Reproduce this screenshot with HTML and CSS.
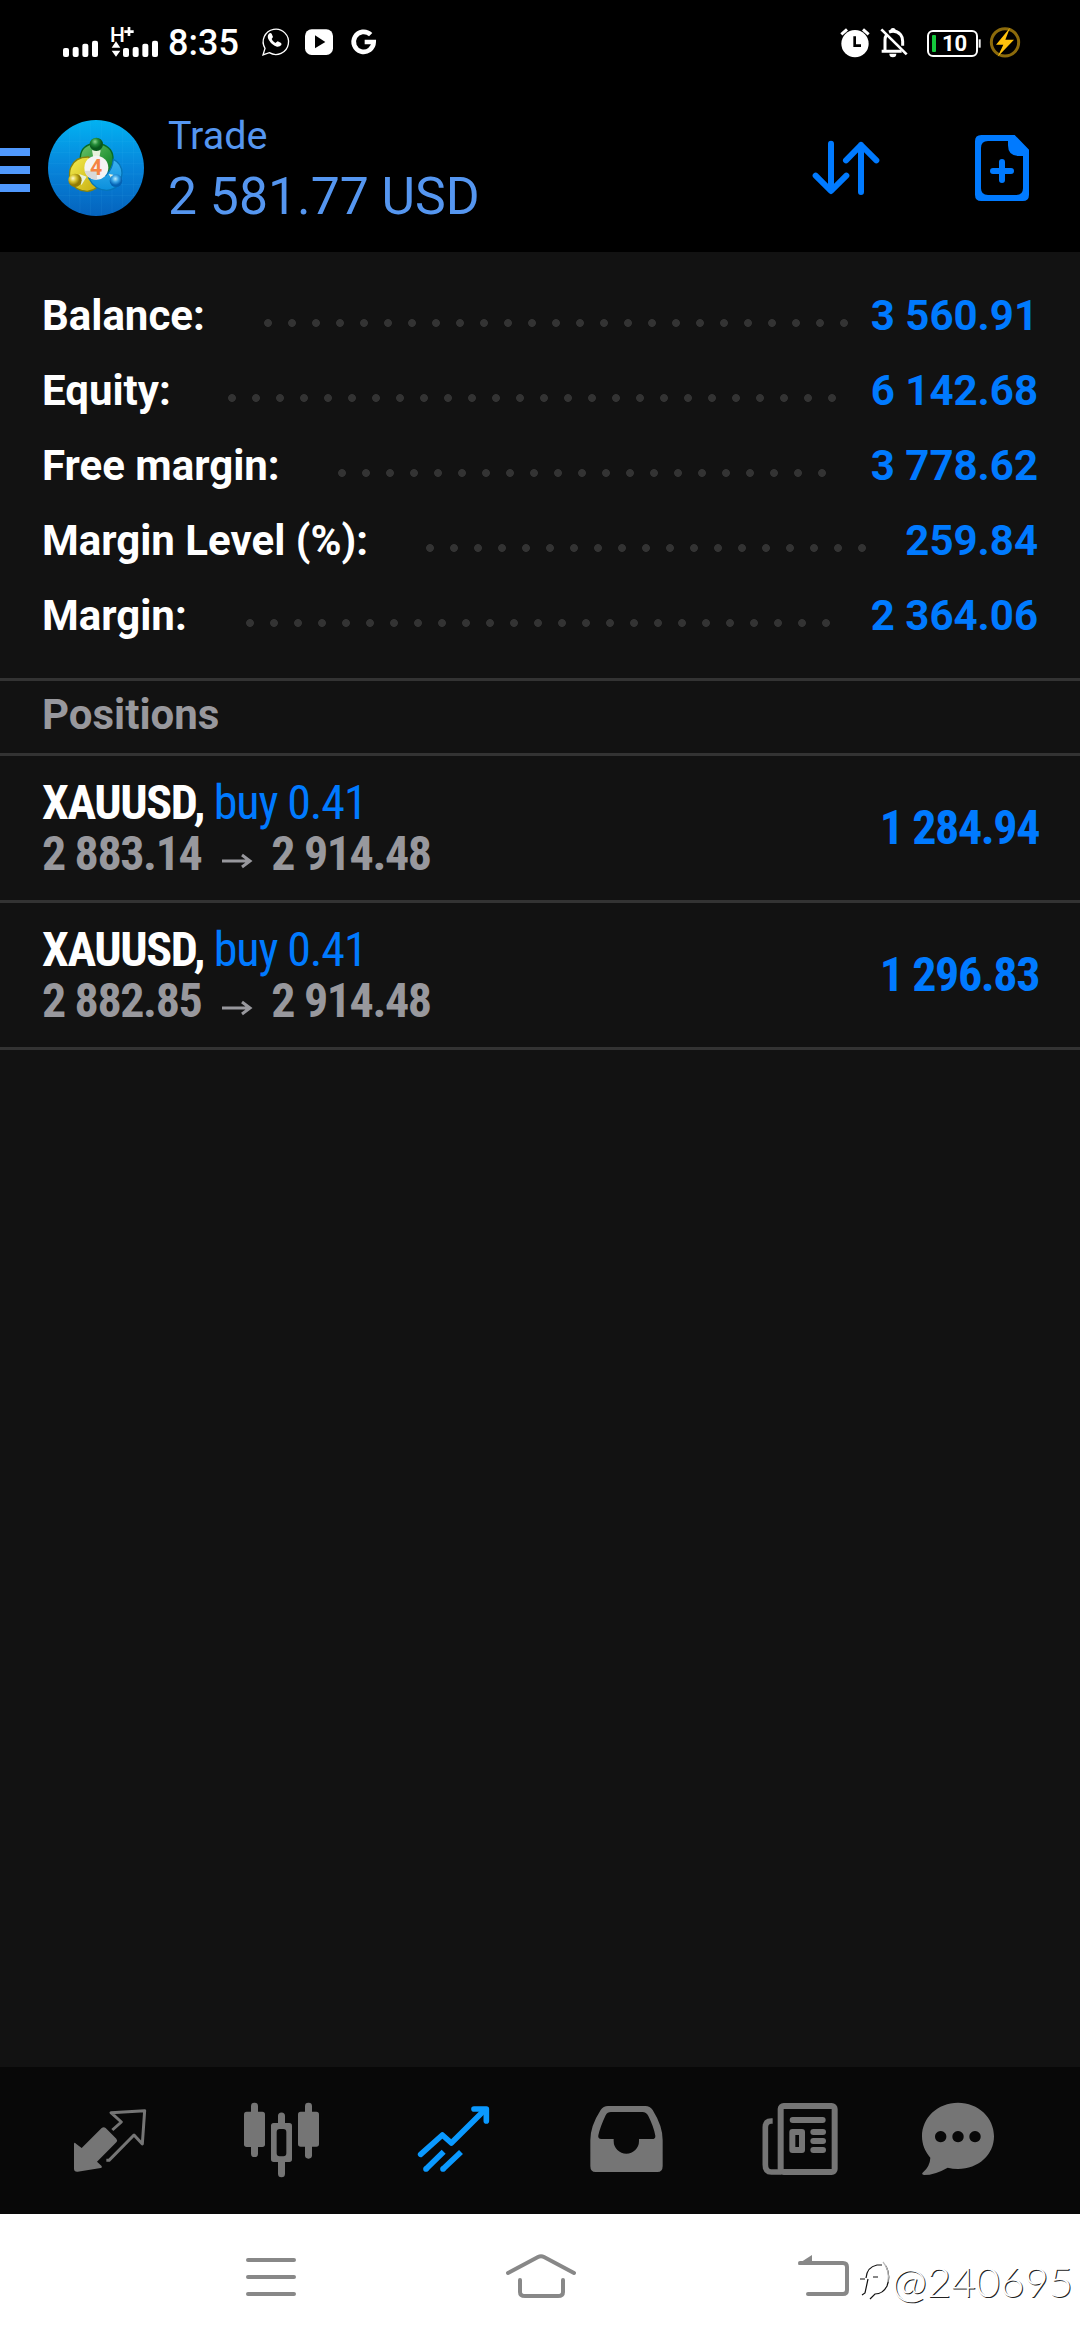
FILE: index.html
```html
<!DOCTYPE html>
<html lang="en">
<head>
<meta charset="utf-8">
<title>Trade</title>
<link rel="stylesheet" href="styles.css">
</head>
<body>
<main class="screen">
  <div class="status">
    <svg class="signal" viewBox="60 30 117 126" width="39" height="42"><g fill="#fff"><rect x="69" y="114" width="18" height="27" rx="6"/><rect x="98" y="111" width="18" height="30" rx="6"/><rect x="127" y="101" width="18" height="40" rx="6"/><rect x="156" y="92" width="18" height="49" rx="6"/></g></svg>
    <div class="network">
      <span class="network-type">H</span>
      <svg viewBox="210 30 150 126" width="50" height="42"><path d="M267 51v27M253 65h28" stroke="#fff" stroke-width="8"/><g fill="#fff"><path d="M228 94l13 19h-26zM228 140l13-18h-26z"/><rect x="249" y="114" width="18" height="27" rx="6"/><rect x="278" y="111" width="18" height="30" rx="6"/><rect x="307" y="101" width="18" height="40" rx="6"/><rect x="336" y="92" width="18" height="49" rx="6"/></g></svg>
    </div>
    <span class="clock">8:35</span>
    <svg class="apps" viewBox="654 30 366 126" width="122" height="42">
      <path d="M669 135l6-20A38 38 0 1 1 688 128Z" fill="none" stroke="#fff" stroke-width="4"/>
      <path d="M686 72q-6 8 1 19q9 15 24 19q8 1 13-5q2-5-2-7l-9-4-7 5q-8-4-11-12l4-6-4-10q-4-5-9 1z" fill="#fff"/>
      <rect x="795" y="58" width="84" height="77" rx="20" fill="#fff"/><path d="M825 76l31 20-31 19z" fill="#000"/>
      <path d="M992 74a30 30 0 1 0 9 22H974" fill="none" stroke="#fff" stroke-width="14"/>
    </svg>
    <svg class="alerts" viewBox="54 30 216 126" width="72" height="42">
      <circle cx="105" cy="101" r="41" fill="#fff"/><path d="M64 73l17-15M146 73l-17-15" stroke="#fff" stroke-width="9"/><path d="M104 79v28h19" fill="none" stroke="#000" stroke-width="8"/>
      <g fill="none" stroke="#fff" stroke-width="8"><path d="M185 124h60M195 124V90q0-10 5-16M207 66q20-8 35 8 6 7 6 20v13" stroke-width="9"/><path d="M184 58l76 75"/></g><path d="M208 131h21a10 10 0 0 1-21 0zM211 65v-3a8 8 0 0 1 16 0v3z" fill="#fff"/>
    </svg>
    <div class="battery"><span class="battery-level"></span><span>10</span></div>
    <svg class="charge" viewBox="480 30 126 126" width="42" height="42"><rect x="476" y="88" width="6" height="25" fill="#eee"/><circle cx="555" cy="97" r="41" fill="none" stroke="#8b6a0b" stroke-width="9"/><path d="M570 53l-42 51h22l-17 36 49-51h-26z" fill="#ffc20c"/></svg>
  </div>

  <header class="header">
    <svg class="menu" viewBox="0 0 30 44" width="30" height="44"><path d="M0 4h30M0 22h30M0 40h30" stroke="#4f98fc" stroke-width="8"/></svg>
    <svg class="logo" viewBox="144 60 288 288" width="96" height="96">
      <defs>
        <linearGradient id="sky" x1="0" y1="0" x2="0" y2="1"><stop offset="0" stop-color="#02b2f2"/><stop offset=".5" stop-color="#0784da"/><stop offset="1" stop-color="#0563bd"/></linearGradient>
        <linearGradient id="green" x1="0" y1="0" x2="1" y2="1"><stop offset="0" stop-color="#6fc46c"/><stop offset=".6" stop-color="#2d9a3c"/><stop offset="1" stop-color="#087524"/></linearGradient>
        <linearGradient id="yellow" x1="0" y1="0" x2="1" y2="1"><stop offset="0" stop-color="#f5ee52"/><stop offset="1" stop-color="#c4aa0a"/></linearGradient>
        <linearGradient id="blue" x1="0" y1="0" x2="0" y2="1"><stop offset="0" stop-color="#3cb2f0"/><stop offset="1" stop-color="#0a8fdc"/></linearGradient>
        <radialGradient id="ballG" cx=".4" cy=".3"><stop offset="0" stop-color="#8ad48e"/><stop offset=".5" stop-color="#238c38"/><stop offset="1" stop-color="#08591c"/></radialGradient>
        <radialGradient id="ballY" cx=".35" cy=".35"><stop offset="0" stop-color="#fffbd0"/><stop offset=".5" stop-color="#d9c530"/><stop offset="1" stop-color="#927a05"/></radialGradient>
        <radialGradient id="ballB" cx=".45" cy=".35"><stop offset="0" stop-color="#bdeeff"/><stop offset=".5" stop-color="#3ba6e8"/><stop offset="1" stop-color="#0562b3"/></radialGradient>
      </defs>
      <circle cx="288" cy="204" r="144" fill="url(#sky)"/>
      <path d="M208 87v232M240 70v268M272 62v284M304 62v284M336 70v268M368 87v232M400 120v168M165 124h246M150 157h276M145 190h286M146 222h284M152 254h272M170 286h236" stroke="#5fd0ff" stroke-opacity=".13" stroke-width="2"/>
      <path d="M241 180Q239 140 275 132H303Q341 143 339 180Q338 206 326 218L305 190H270L248 184Z" fill="url(#green)" stroke="#086c25" stroke-width="4"/>
      <path d="M266 171Q226 170 213 201Q206 216 210 240Q222 272 262 274Q280 272 292 262L300 220Z" fill="url(#yellow)" stroke="#87820c" stroke-width="4"/>
      <path d="M340 178Q366 190 366 220Q362 268 320 271Q284 270 266 234L318 226Q338 206 340 178Z" fill="url(#blue)" stroke="#0575b7" stroke-width="4"/>
      <path d="M276 151h26l-4 22h-18zM238 222l22 8-16 26zM326 222l14 2 2 26z" fill="#e8f2dc"/>
      <circle cx="289" cy="133" r="20" fill="url(#ballG)"/><circle cx="225" cy="241" r="20" fill="url(#ballY)"/><circle cx="348" cy="242" r="19" fill="url(#ballB)"/>
      <circle cx="289" cy="203" r="36" fill="#f4f4f4"/><path d="M253 212h38v27q-30-1-38-27z" fill="#d9d9d9"/>
      <text class="logo-digit" x="288" y="226" text-anchor="middle">4</text>
    </svg>
    <div class="heading"><div class="title">Trade</div><div class="amount">2 581.77 USD</div></div>
    <svg class="sort" viewBox="90 84 216 180" width="72" height="60"><g fill="none" stroke="#007aff" stroke-width="18" stroke-linecap="round"><path d="M153 101v141M107 197l46 46 46-46M243 246V105M198 151l45-46 46 46" stroke-linejoin="round"/></g></svg>
    <svg class="new-order" viewBox="576 66 180 216" width="60" height="72"><path fill="#007aff" fill-rule="evenodd" d="M604 75H704L747 119V254Q747 273 728 273H604Q585 273 585 254V94Q585 75 604 75ZM684 93H624Q603 93 603 114V235Q603 255 624 255H709Q729 255 729 235V138H716Q684 138 684 106Z"/><path d="M639 183h54M666 156v54" stroke="#007aff" stroke-width="18" stroke-linecap="round"/></svg>
  </header>

  <section class="summary">
    <div class="line balance"><span>Balance:</span><i class="dots"></i><b>3 560.91</b></div>
    <div class="line equity"><span>Equity:</span><i class="dots"></i><b>6 142.68</b></div>
    <div class="line free"><span>Free margin:</span><i class="dots"></i><b>3 778.62</b></div>
    <div class="line level"><span>Margin Level (%):</span><i class="dots"></i><b>259.84</b></div>
    <div class="line margin"><span>Margin:</span><i class="dots"></i><b>2 364.06</b></div>
  </section>

  <h2 class="section-title">Positions</h2>
  <section class="positions">
    <article class="position">
      <div><div class="symbol">XAUUSD, <span class="side">buy 0.41</span></div>
      <div class="prices"><span>2 883.14</span><svg viewBox="0 0 30 14" width="30" height="14"><path d="M0 7h27M20 1l8 6-8 6" fill="none" stroke="#98989d" stroke-width="3"/></svg><span>2 914.48</span></div></div>
      <div class="profit">1 284.94</div>
    </article>
    <article class="position">
      <div><div class="symbol">XAUUSD, <span class="side">buy 0.41</span></div>
      <div class="prices"><span>2 882.85</span><svg viewBox="0 0 30 14" width="30" height="14"><path d="M0 7h27M20 1l8 6-8 6" fill="none" stroke="#98989d" stroke-width="3"/></svg><span>2 914.48</span></div></div>
      <div class="profit">1 296.83</div>
    </article>
  </section>

  <nav class="tabs">
    <svg viewBox="84 147 252 252"><path fill="#757575" d="M102 281q1-5 6 0l17 13 60-60q6-5 12 0l32 32q5 6 0 11l-58 58 13 12q4 5-2 7l-69 11q-11 1-11-9z"/><path d="M217 240l27-24-31-28 101-6-7 100-25-27-75 76h-8" fill="none" stroke="#757575" stroke-width="9" stroke-linejoin="round"/></svg>
    <svg viewBox="600 147 252 252"><g fill="#757575"><rect x="633" y="158" width="21" height="163" rx="10"/><rect x="612" y="185" width="63" height="106" rx="8"/><rect x="795" y="158" width="21" height="168" rx="10"/><rect x="774" y="185" width="63" height="105" rx="8"/><path fill-rule="evenodd" d="M714 219v-21a10 10 0 0 1 21 0v21h13q8 0 8 8v101q0 8-8 8h-13v35a10 10 0 0 1-21 0v-35h-13q-8 0-8-8V227q0-8 8-8zM719 237q-9 0-9 9v64q0 9 9 9h11q9 0 9-9v-64q0-9-9-9z"/></g></svg>
    <svg viewBox="1116 147 252 252"><g fill="none" stroke="#0a99ff" stroke-width="17" stroke-linejoin="round"><path d="M1142 313l65-58 27 24 96-95" stroke-linecap="round"/><path d="M1302 177h37v36" stroke-linecap="round"/><path d="M1158 357l53-52M1209 357l54-51"/></g><g fill="#0a99ff"><circle cx="1158" cy="357" r="8.500"/><circle cx="1209" cy="357" r="8.500"/></g></svg>
    <svg viewBox="132 147 252 252"><path fill="#757575" fill-rule="evenodd" d="M204 168H316Q330 168 338 180Q368 228 368 270V348Q368 366 352 366H167Q151 366 151 348V270Q151 228 182 180Q190 168 204 168ZM213 186Q202 186 197 196Q180 232 175 256Q173 267 184 267H221V273A38 38 0 0 0 297 273V267H336Q347 267 346 257Q341 230 325 198Q319 186 307 186Z"/></svg>
    <svg viewBox="648 147 252 252"><g fill="none" stroke="#757575"><rect x="722" y="168" width="162" height="198" rx="9" stroke-width="18"/><path d="M698 213h-4q-18 0-18 19v112q0 22 18 22h30" stroke-width="17"/><rect x="757" y="246" width="29" height="54" stroke-width="18" stroke-linejoin="round"/><path d="M758 210h90M820 246h29M820 273h29M820 300h29" stroke-width="18" stroke-linecap="round"/></g></svg>
    <svg viewBox="1164 147 252 252"><path fill="#757575" fill-rule="evenodd" d="M1254 158C1315 158 1362 203 1362 259S1315 357 1254 357Q1238 357 1223 353Q1185 375 1152 375Q1142 373 1150 366Q1170 348 1171 323C1155 305 1146 283 1146 259C1146 203 1193 158 1254 158ZM1202 243a17 17 0 1 0 .1 0zM1254 243a17 17 0 1 0 .1 0zM1305 243a17 17 0 1 0 .1 0z"/></svg>
  </nav>

  <footer class="system">
    <svg class="recents" viewBox="246 2250 50 50" width="50" height="50"><path d="M248 2260h46M248 2277h46M248 2294h46" stroke="#888" stroke-width="4" stroke-linecap="round"/></svg>
    <svg class="home" viewBox="504 2250 74 50" width="74" height="50"><path d="M508 2273l30-16q3-1.500 6 0l30 16M520 2280v12q0 4 5 4h33q5 0 5-4v-12" fill="none" stroke="#888" stroke-width="4" stroke-linecap="round"/></svg>
    <svg class="back" viewBox="796 2250 56 50" width="56" height="50"><path d="M800 2263h43q4 0 4 4v23q0 4-4 4h-35" fill="none" stroke="#888" stroke-width="4" stroke-linecap="round"/><path d="M798 2264l14-9v10h-13z" fill="#888"/></svg>
    <div class="watermark"><svg viewBox="0 0 34 42" width="34" height="42"><g fill="none" stroke-width="1.200"><path d="M4 35l3-2 3-14M8 18q1-11 11-13h5M2 19h5M15 17h5" stroke="#111"/><path d="M28 6q5 10 1 20-4 8-12 8l-5 5" stroke="#111"/><path d="M25 2q7 8 5 20" stroke="#bbb"/></g></svg><span>@240695</span></div>
  </footer>
</main>
</body>
</html>
```

FILE: styles.css
```css
* { box-sizing: border-box; }
body { margin: 0; background: #121212; font-family: Roboto, "Liberation Sans", sans-serif; }
svg { display: block; flex: none; overflow: visible; }
.screen { width: 1080px; height: 2340px; display: flex; flex-direction: column; overflow: hidden; }

.status { height: 84px; padding: 20px 0 22px 60px; display: flex; background: #000; color: #fff; }
.network { display: grid; margin-left: 11px; }
.network > * { grid-area: 1 / 1; }
.network-type { font-size: 21px; line-height: 24px; font-weight: 500; margin-top: 3px; }
.clock { margin-left: 8px; width: 76px; font-size: 36px; font-weight: 500; line-height: 47px; }
.apps { margin-left: 14px; }
.alerts { margin-left: 458px; }
.battery { margin: 10px 0 0 17px; width: 51px; height: 27px; border: 2px solid #fff; border-radius: 6px; display: flex; align-items: center; padding-left: 3px; gap: 6px; font-size: 22px; font-weight: 700; }
.battery-level { width: 4px; height: 17px; background: #14c83c; border-radius: 1px; }
.charge { margin-left: 2px; }

.header { height: 168px; background: #000; display: flex; align-items: flex-start; color: #5596f0; }
.menu { margin-top: 64px; }
.logo { margin: 36px 0 0 18px; }
.logo-digit { font-size: 64px; font-weight: 700; fill: #f58442; }
.heading { margin: 27px 0 0 24px; width: 400px; }
.title { font-size: 39.5px; line-height: 50px; }
.amount { font-size: 51.7px; line-height: 72px; white-space: nowrap; }
.sort { margin: 54px 0 0 242px; }
.new-order { margin: 48px 0 0 90px; }

.summary { height: 426px; padding: 26px 42px 0; display: flex; flex-direction: column; }
.line { height: 75px; display: grid; line-height: 75px; font-size: 42px; font-weight: 700; color: #fff; white-space: nowrap; }
.line b { font-weight: 700; color: #007aff; justify-self: end; }
.dots { height: 24px; margin-top: 33px; background: radial-gradient(circle at 12px 12px, #333 3.5px, transparent 4.300px) 0 0 / 24px 24px; }
.balance { grid-template-columns: 214px 600px 1fr; }
.equity { grid-template-columns: 178px 624px 1fr; }
.free { grid-template-columns: 288px 504px 1fr; }
.level { grid-template-columns: 376px 456px 1fr; }
.margin { grid-template-columns: 196px 600px 1fr; }

.section-title { margin: 0; height: 78px; border: solid #333; border-width: 3px 0; padding-left: 42px; font-size: 42px; line-height: 67px; font-weight: 700; color: #98989d; }
.positions { flex: 1; font-family: "Roboto Condensed", Roboto, sans-serif; font-stretch: 75%; font-size: 48px; font-weight: 700; letter-spacing: -1.4px; white-space: nowrap; }
.position { height: 147px; border-bottom: 3px solid #333; padding: 21px 42px 0; display: flex; justify-content: space-between; color: #fff; line-height: 51px; }
.side { font-weight: 400; color: #007aff; letter-spacing: -1.1px; }
.prices { color: #98989d; display: flex; align-items: center; }
.prices svg { margin: 15px 19px 0 21px; }
.profit { color: #007aff; padding-top: 25px; margin-right: -1px; }

.tabs { height: 147px; padding: 32px 0 0 68px; display: flex; gap: 88px; background: #080808; }
.tabs svg { width: 84px; height: 84px; }

.system { height: 126px; padding: 36px 0 0 246px; display: flex; background: #fff; }
.home { margin-left: 208px; }
.back { margin-left: 218px; }
.watermark { display: flex; margin: 10px 0 0 6px; width: 214px; color: #fff; font-family: Lato, sans-serif; font-weight: 300; font-size: 42px; line-height: 42px; text-shadow: 1px 1px 0 #222; white-space: nowrap; }
```
